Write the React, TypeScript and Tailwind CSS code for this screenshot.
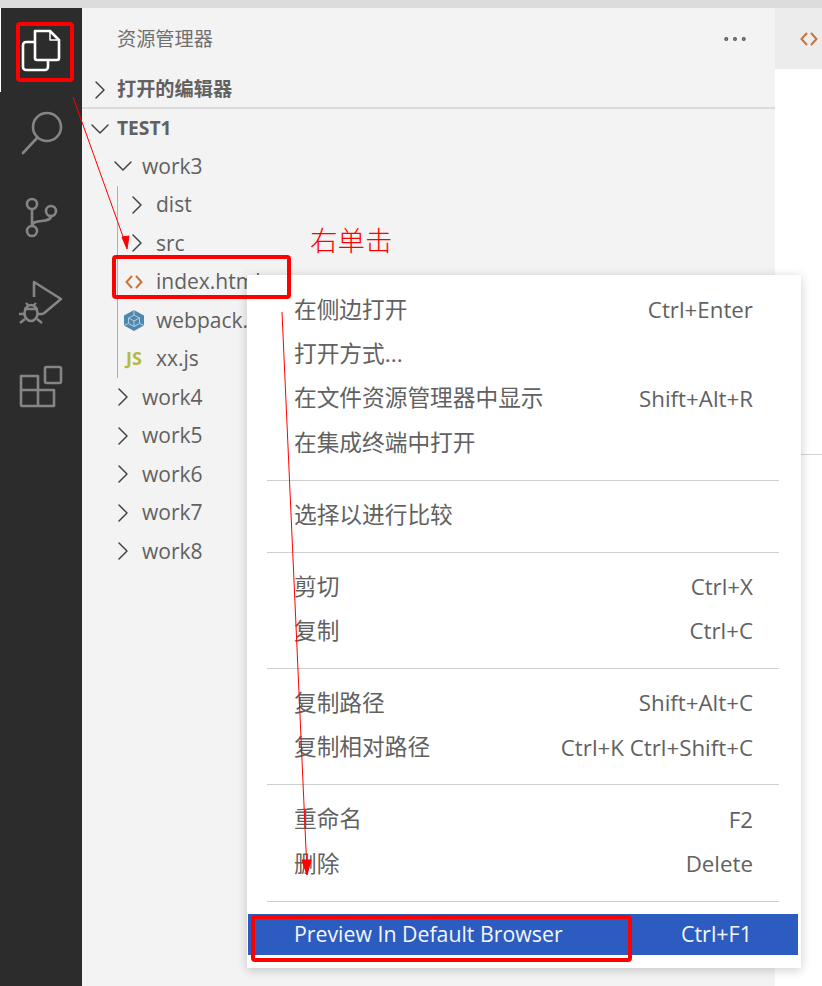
import { ChevronDown, ChevronRight, Ellipsis } from "lucide-react";
import type { ReactNode } from "react";

const uiFont = { fontFamily: '"Open Sans", "Noto Sans CJK SC", sans-serif' };

function FilesIcon() {
    return (
        <svg width="48" height="48" viewBox="0 0 48 48" fill="none" stroke="#fff" strokeWidth="2.6" strokeLinejoin="round">
            <path d="M17 5h15l9 9v18a2 2 0 0 1-2 2H19a2 2 0 0 1-2-2z" />
            <path d="M16 16H8a3 3 0 0 0-3 3v22a3 3 0 0 0 3 3h19a3 3 0 0 0 3-3v-7" />
            <path d="M32 5v9h9" strokeWidth="1.5" />
        </svg>
    );
}

function SearchIcon() {
    return (
        <svg width="48" height="48" viewBox="0 0 48 48" fill="none" stroke="#858585" strokeWidth="2.6">
            <circle cx="30" cy="17" r="14" />
            <path d="M20 28 6 43" strokeLinecap="round" />
        </svg>
    );
}

function GitIcon() {
    return (
        <svg width="48" height="48" viewBox="0 0 48 48" fill="none" stroke="#858585" strokeWidth="2.6">
            <circle cx="15" cy="10" r="5" />
            <circle cx="34" cy="17" r="5" />
            <circle cx="15" cy="37" r="5" />
            <path d="M15 15v17M34 22c0 8-19 2-19 10" />
        </svg>
    );
}

function DebugIcon() {
    return (
        <svg width="48" height="48" viewBox="0 0 48 48" fill="none" stroke="#858585" strokeWidth="2.6">
            <path d="M17 19V4l27 17-18 15" strokeLinejoin="round" />
            <ellipse cx="14" cy="35" rx="6.5" ry="8" />
            <path d="M7 31h14M9 25l3 3M19 25l-3 3M2 36h6M20 36h6M3 45l5-4M25 45l-5-4" strokeWidth="2.4" />
        </svg>
    );
}

function ExtensionsIcon() {
    return (
        <svg width="48" height="48" viewBox="0 0 48 48" fill="none" stroke="#858585" strokeWidth="2.6" strokeLinejoin="round">
            <rect x="28" y="5" width="16" height="16" rx="1.5" />
            <path d="M4 14h17v14h16v16H5a1 1 0 0 1-1-1zM4 28h17v16" />
        </svg>
    );
}

function HtmlIcon() {
    return (
        <svg width="18" height="14" viewBox="0 0 18 14" fill="none" stroke="#c9743b" strokeWidth="2">
            <path d="M7 1 1.5 7 7 13M11 1l5.5 6L11 13" />
        </svg>
    );
}

function WebpackIcon() {
    return (
        <svg width="20" height="21" viewBox="0 0 20 21">
            <path d="M10 0 20 5.5v10L10 21 0 15.5v-10z" fill="#4f88ae" />
            <path d="M10 5 15.5 8v5.5L10 16.5l-5.5-3V8zM4.5 8 10 11l5.5-3M10 11v5.5M10 5V0M4.5 13.5 0 15.5M15.5 13.5l4.5 2" fill="none" stroke="#b4cede" strokeWidth="1" />
        </svg>
    );
}

function TreeRow({ pad, box, icon, label, bold }: { pad: string; box: string; icon: ReactNode; label: string; bold?: boolean }) {
    return (
        <div className={`h-[38.5px] flex items-center text-[#616161] whitespace-nowrap ${pad} ${bold ? "text-[19.2px] font-bold" : "text-[21px]"}`}>
            <span className={`flex items-center justify-center shrink-0 ${box}`}>{icon}</span>
            <span>{label}</span>
        </div>
    );
}

const right = <ChevronRight size={32} strokeWidth={1.1} className="text-[#424242] shrink-0" />;
const down = <ChevronDown size={32} strokeWidth={1.1} className="text-[#424242] shrink-0" />;

type MenuEntry = { label: string; keys?: string };

const menuGroups: MenuEntry[][] = [
    [
        { label: "在侧边打开", keys: "Ctrl+Enter" },
        { label: "打开方式..." },
        { label: "在文件资源管理器中显示", keys: "Shift+Alt+R" },
        { label: "在集成终端中打开" },
    ],
    [{ label: "选择以进行比较" }],
    [
        { label: "剪切", keys: "Ctrl+X" },
        { label: "复制", keys: "Ctrl+C" },
    ],
    [
        { label: "复制路径", keys: "Shift+Alt+C" },
        { label: "复制相对路径", keys: "Ctrl+K Ctrl+Shift+C" },
    ],
    [
        { label: "重命名", keys: "F2" },
        { label: "删除", keys: "Delete" },
    ],
];

function ContextMenu() {
    return (
        <div className="absolute left-[247px] top-[275px] w-[554px] h-[693px] bg-white shadow-[0_2px_10px_rgba(0,0,0,0.2)] pt-[13px] text-[22.7px] text-[#616161]">
            {menuGroups.map((group, i) => (
                <div key={i}>
                    {group.map((item) => (
                        <div key={item.label} className="h-[44.2px] flex items-center justify-between pl-[47px] pr-[48px] whitespace-nowrap">
                            <span>{item.label}</span>
                            {item.keys && <span className="text-[22.3px]">{item.keys}</span>}
                        </div>
                    ))}
                    <div className="ml-[20px] mr-[22px] mt-[15px] mb-[11.9px] h-px bg-[#cfcfcf]" />
                </div>
            ))}
            <div className="h-[41px] ml-px mr-[3px] bg-[#2c5cbf] text-[#f4f7fc] flex items-center justify-between pl-[46px] pr-[46px] whitespace-nowrap">
                <span className="text-[21.3px]">Preview In Default Browser</span>
                <span className="text-[21.5px]">Ctrl+F1</span>
            </div>
        </div>
    );
}

export default function App() {
    const activity = [<SearchIcon key="s" />, <GitIcon key="g" />, <DebugIcon key="d" />, <ExtensionsIcon key="e" />];
    const folders = ["work4", "work5", "work6", "work7", "work8"];

    return (
        <div className="relative w-[822px] h-[986px] overflow-hidden bg-white flex flex-col" style={uiFont}>
            <div className="h-2 shrink-0 bg-[#dcdcdc]" />
            <div className="flex flex-1 min-h-0">
                {/* Activity bar */}
                <div className="w-[82px] shrink-0 bg-[#2c2c2c] flex flex-col">
                    <div className="h-[84px] flex items-center justify-center border-l border-white">
                        <FilesIcon />
                    </div>
                    {activity.map((icon, i) => (
                        <div key={i} className="h-[84px] flex items-center justify-center">
                            {icon}
                        </div>
                    ))}
                </div>

                {/* Sidebar */}
                <div className="w-[693px] shrink-0 bg-[#f3f3f3] flex flex-col">
                    <div className="h-[61px] flex items-center justify-between pl-[35px] pr-[25px] text-[19.2px] text-[#6f6f6f]">
                        <span className="mt-[2px]">资源管理器</span>
                        <Ellipsis size={30} strokeWidth={1.2} className="text-[#555]" />
                    </div>
                    <div className="h-[39.5px] border-b-2 border-[#dcdcdc]">
                        <TreeRow pad="pt-[3px]" box="w-[35px]" icon={right} label="打开的编辑器" bold />
                    </div>
                    <TreeRow pad="pt-[2px]" box="w-[35px]" icon={down} label="TEST1" bold />
                    <TreeRow pad="pl-[22px]" box="w-[38px]" icon={down} label="work3" />
                    <div className="ml-[35px] border-l border-[#b0b0b0]">
                        <TreeRow pad="" box="w-[38px]" icon={right} label="dist" />
                        <TreeRow pad="" box="w-[38px]" icon={right} label="src" />
                        <TreeRow pad="" box="w-[38px] pr-[6px]" icon={<HtmlIcon />} label="index.html" />
                        <TreeRow pad="" box="w-[38px] pr-[6px]" icon={<WebpackIcon />} label="webpack.config.js" />
                        <TreeRow pad="" box="w-[38px] pr-[6px]" icon={<span className="text-[18px] font-bold text-[#b8b83f]">JS</span>} label="xx.js" />
                    </div>
                    {folders.map((name) => (
                        <TreeRow key={name} pad="pl-[22px]" box="w-[38px]" icon={right} label={name} />
                    ))}
                </div>

                {/* Editor */}
                <div className="flex-1 flex flex-col">
                    <div className="h-[61px] bg-[#ececec] flex items-center pl-[25px]">
                        <HtmlIcon />
                    </div>
                    <div className="h-[386px] border-b border-[#d4d4d4]" />
                </div>
            </div>

            <ContextMenu />

            {/* Annotations */}
            <div className="absolute left-[16px] top-[22px] w-[58px] h-[60px] border-4 border-[#ff0000] rounded-sm" />
            <div className="absolute left-[112px] top-[255px] w-[179px] h-[44px] border-4 border-[#ff0000] rounded-sm" />
            <div className="absolute left-[251px] top-[915px] w-[381px] h-[47px] border-4 border-[#ff0000] rounded-sm" />
            <div className="absolute left-[310px] top-[221px] text-[27.5px] font-extralight text-[#ff0000] leading-[36px]" style={{ fontFamily: '"Noto Sans CJK SC", serif' }}>
                右单击
            </div>
            <svg className="absolute left-0 top-0" width="822" height="986" fill="none" stroke="#ff0000" strokeWidth="1">
                <path d="M73 97 126 245" />
                <path d="M122 237l5 12 2-13z" fill="#ff0000" />
                <path d="M282 312 307 872" />
                <path d="M302 860l5 15 4-15z" fill="#ff0000" />
            </svg>
        </div>
    );
}
